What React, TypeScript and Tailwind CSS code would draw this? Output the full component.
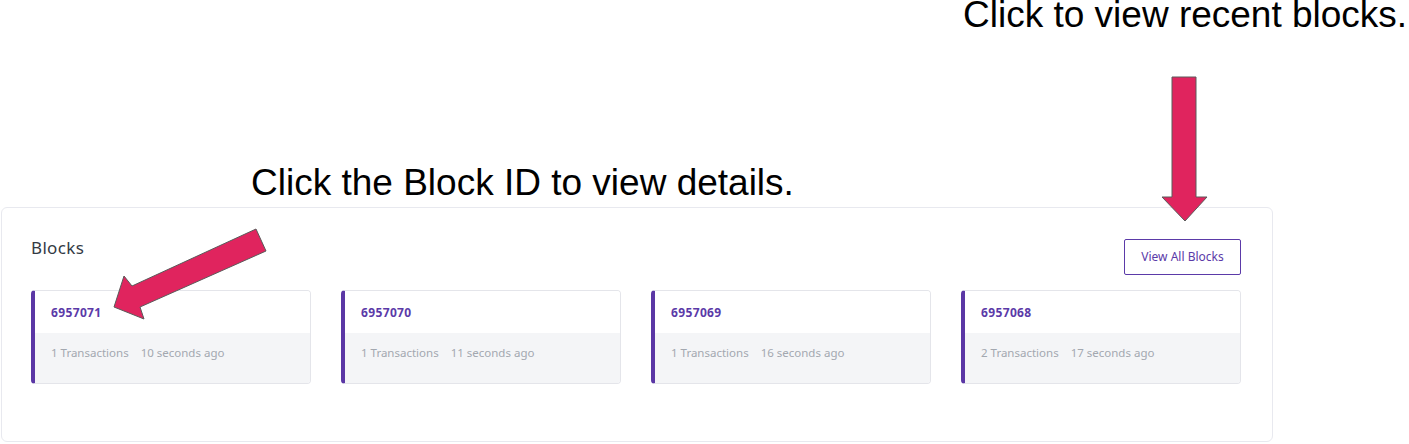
import React from "react";

const blocks = [
  { id: "6957071", tx: "1 Transactions", ago: "10 seconds ago" },
  { id: "6957070", tx: "1 Transactions", ago: "11 seconds ago" },
  { id: "6957069", tx: "1 Transactions", ago: "16 seconds ago" },
  { id: "6957068", tx: "2 Transactions", ago: "17 seconds ago" },
];

export default function App() {
  return (
    <div className="relative w-[1409px] h-[444px] bg-white overflow-hidden">
      <div className="pt-[207px] pl-[1px]">
        <div className="w-[1272px] h-[235px] rounded-md border border-[#e8e9ef] bg-white px-[29px] pt-[30px] [font-family:'Noto_Sans',sans-serif]">
          <div className="flex items-start justify-between">
            <h2 className="text-[17px] text-[#333a44] leading-[20px] tracking-[0.02em]">Blocks</h2>
            <button className="mt-[1px] mr-[2px] h-[36px] w-[117px] rounded-[2px] border border-[#5b3aa8] text-[12px] text-[#5b3aa8] bg-white">
              View All Blocks
            </button>
          </div>
          <div className="mt-[15px] flex gap-[30px]">
            {blocks.map((b) => (
              <div
                key={b.id}
                className="w-[280px] h-[94px] rounded-[4px] border border-[#e4e5ea] border-l-[4px] border-l-[#5b37a5] overflow-hidden flex flex-col"
              >
                <div className="h-[42px] bg-white pl-[16px] flex items-center">
                  <span className="text-[12px] font-bold text-[#5b3aa8] mt-[2px] tracking-[0.03em]">{b.id}</span>
                </div>
                <div className="flex-1 bg-[#f4f5f7] pl-[16px] flex items-center gap-[12px] text-[11.5px] text-[#a3a8b0] pb-[10px]">
                  <span>{b.tx}</span>
                  <span>{b.ago}</span>
                </div>
              </div>
            ))}
          </div>
        </div>
      </div>

      <div className="absolute left-[963px] top-0 text-[37px] leading-[30px] text-black whitespace-nowrap [font-family:'Liberation_Sans',Arial,sans-serif]">
        Click to view recent blocks.
      </div>
      <div className="absolute left-[251px] top-[163px] text-[37px] leading-[40px] text-black whitespace-nowrap [font-family:'Liberation_Sans',Arial,sans-serif]">
        Click the Block ID to view details.
      </div>

      <svg className="absolute left-0 top-0 pointer-events-none" width="1409" height="444">
        <polygon
          points="1172,77 1196,77 1196,197 1207,197 1185,221 1162,197 1172,197"
          fill="#e0245e"
          stroke="#5a5a5a"
          strokeWidth="1"
        />
        <polygon
          points="256,229 132,286 124,276 114,307 144,319 140,307 266,251"
          fill="#e0245e"
          stroke="#5a5a5a"
          strokeWidth="1"
        />
      </svg>
    </div>
  );
}
